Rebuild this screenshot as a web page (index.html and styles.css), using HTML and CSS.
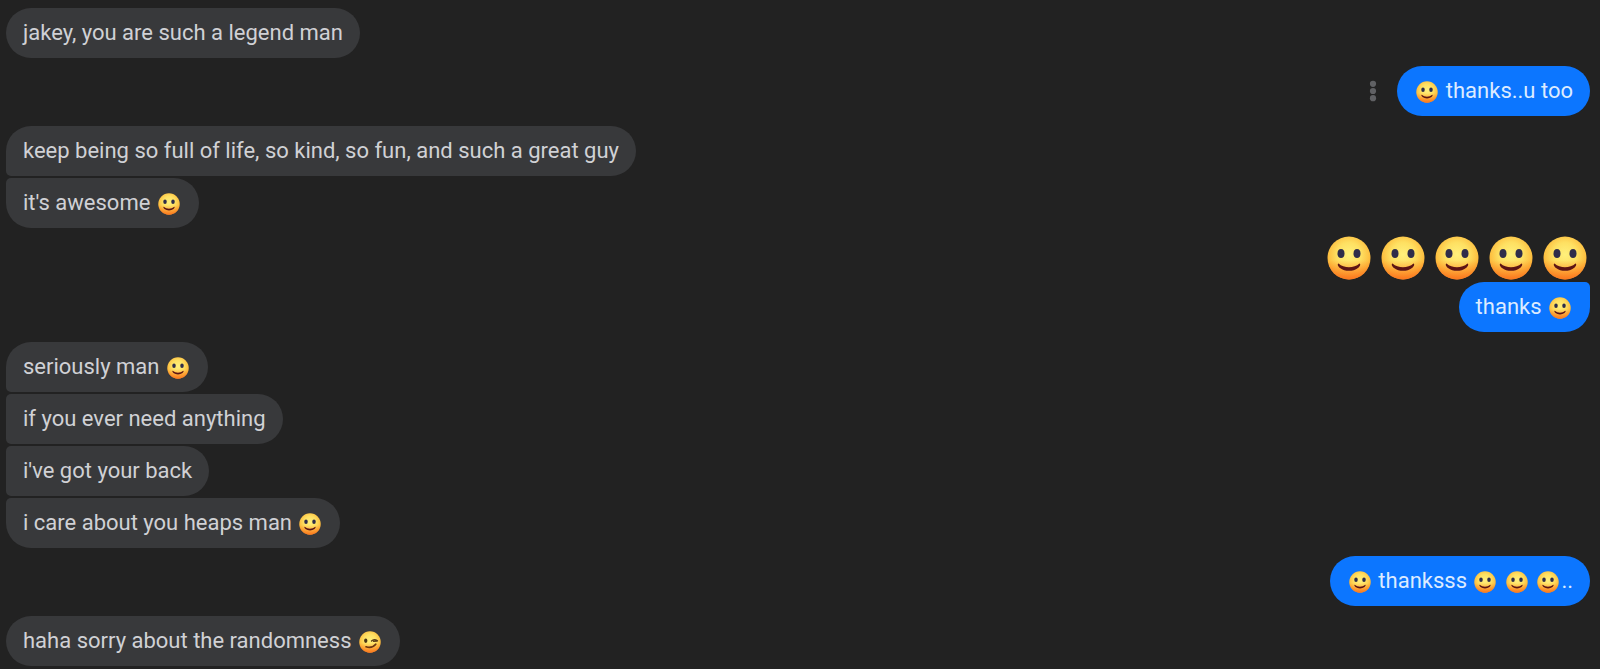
FILE: index.html
```html
<!DOCTYPE html>
<html lang="en">
<head>
<meta charset="utf-8">
<meta name="viewport" content="width=device-width, initial-scale=1">
<title>Conversation</title>
<link rel="stylesheet" href="styles.css">
</head>
<body>
<svg class="defs" width="0" height="0" aria-hidden="true">
  <defs>
    <radialGradient id="face" cx="0.5" cy="0.42" r="0.62">
      <stop offset="0" stop-color="#fff07c"/>
      <stop offset="0.45" stop-color="#fee062"/>
      <stop offset="0.78" stop-color="#fdbf40"/>
      <stop offset="1" stop-color="#f7922e"/>
    </radialGradient>
    <linearGradient id="shade" x1="0" y1="0" x2="0" y2="1">
      <stop offset="0.55" stop-color="#ff7a1c" stop-opacity="0"/>
      <stop offset="1" stop-color="#fb6f1c" stop-opacity="0.85"/>
    </linearGradient>
    <symbol id="smile" viewBox="0 0 44 44">
      <circle cx="22" cy="22" r="21.5" fill="url(#face)"/>
      <circle cx="22" cy="22" r="21.5" fill="url(#shade)"/>
      <ellipse cx="14" cy="17.5" rx="3.5" ry="4.5" fill="#2f2d4a"/>
      <ellipse cx="30" cy="17.5" rx="3.5" ry="4.5" fill="#2f2d4a"/>
      <path d="M11.500 27.500 C17 32.500 27 32.500 32.500 27.500 C34 28 33 30.500 31 32 C26 35.800 18 35.800 13 32 C11 30.500 10 28 11.500 27.500Z" fill="#5c1414"/>
    </symbol>
    <symbol id="wink" viewBox="0 0 44 44">
      <circle cx="22" cy="22" r="21.5" fill="url(#face)"/>
      <circle cx="22" cy="22" r="21.5" fill="url(#shade)"/>
      <ellipse cx="13.500" cy="19.500" rx="3.300" ry="4.300" fill="#4a3517"/>
      <path d="M25 20 Q30 14.500 37 19.500 M29 20.500 L36 20" fill="none" stroke="#5a3c17" stroke-width="2.600" stroke-linecap="round"/>
      <path d="M14 31.500 Q26 35.500 33.500 26.500" fill="none" stroke="#6b3510" stroke-width="3.400" stroke-linecap="round"/>
    </symbol>
  </defs>
</svg>
<main class="thread">
  <section class="group in">
    <p class="bubble">jakey, you are such a legend man</p>
  </section>
  <section class="group out">
    <div class="row">
      <button class="more" type="button" aria-label="More options">
        <svg class="dots" viewBox="0 0 8 22" aria-hidden="true"><circle cx="4" cy="3.800" r="3.100"/><circle cx="4" cy="11" r="3.100"/><circle cx="4" cy="18.200" r="3.100"/></svg>
      </button>
      <p class="bubble"><svg class="emoji" role="img" aria-label="smile"><use href="#smile"/></svg> thanks..u too</p>
    </div>
  </section>
  <section class="group in">
    <p class="bubble">keep being so full of life, so kind, so fun, and such a great guy</p>
    <p class="bubble">it's awesome <svg class="emoji" role="img" aria-label="smile"><use href="#smile"/></svg></p>
  </section>
  <section class="group out">
    <div class="big-emojis">
      <svg class="emoji-big" role="img" aria-label="smile"><use href="#smile"/></svg>
      <svg class="emoji-big" role="img" aria-label="smile"><use href="#smile"/></svg>
      <svg class="emoji-big" role="img" aria-label="smile"><use href="#smile"/></svg>
      <svg class="emoji-big" role="img" aria-label="smile"><use href="#smile"/></svg>
      <svg class="emoji-big" role="img" aria-label="smile"><use href="#smile"/></svg>
    </div>
    <p class="bubble">thanks <svg class="emoji" role="img" aria-label="smile"><use href="#smile"/></svg></p>
  </section>
  <section class="group in">
    <p class="bubble">seriously man <svg class="emoji" role="img" aria-label="smile"><use href="#smile"/></svg></p>
    <p class="bubble">if you ever need anything</p>
    <p class="bubble">i've got your back</p>
    <p class="bubble">i care about you heaps man <svg class="emoji" role="img" aria-label="smile"><use href="#smile"/></svg></p>
  </section>
  <section class="group out">
    <p class="bubble"><svg class="emoji" role="img" aria-label="smile"><use href="#smile"/></svg> thanksss <svg class="emoji" role="img" aria-label="smile"><use href="#smile"/></svg> <svg class="emoji" role="img" aria-label="smile"><use href="#smile"/></svg> <svg class="emoji" role="img" aria-label="smile"><use href="#smile"/></svg>..</p>
  </section>
  <section class="group in">
    <p class="bubble">haha sorry about the randomness <svg class="emoji" role="img" aria-label="wink"><use href="#wink"/></svg></p>
  </section>
</main>
</body>
</html>
```

FILE: styles.css
```css
body {
  margin: 0;
  background: #222222;
  color: #d0d1d5;
  font-family: Roboto, "Liberation Sans", sans-serif;
  font-size: 22px;
  line-height: 26px;
}

.defs {
  position: absolute;
}

.thread {
  display: flex;
  flex-direction: column;
  padding: 8px 10px 3px 6px;
}

.group {
  display: flex;
  flex-direction: column;
  gap: 2px;
}

.in {
  align-items: flex-start;
}

.out {
  align-items: flex-end;
}

.in + .out {
  margin-top: 8px;
}

.out + .in {
  margin-top: 10px;
}

.row {
  display: flex;
  align-items: center;
  gap: 20px;
}

.bubble {
  margin: 0;
  padding: 12px 17px;
  border-radius: 25px;
  background: #38393b;
}

.in .bubble:not(:first-child) {
  border-top-left-radius: 5px;
}

.in .bubble:not(:last-child) {
  border-bottom-left-radius: 5px;
}

.out .bubble {
  background: #0c76ff;
  color: #dcebff;
}

.big-emojis + .bubble {
  border-top-right-radius: 5px;
}

.emoji {
  width: 22px;
  height: 22px;
  margin: -5px 2px;
}

.big-emojis {
  display: flex;
  gap: 10px;
  padding-right: 3px;
}

.emoji-big {
  width: 44px;
  height: 44px;
}

.more {
  display: flex;
  padding: 0;
  border: 0;
  background: none;
  cursor: pointer;
}

.dots {
  width: 8px;
  height: 22px;
  fill: #606164;
}
```
